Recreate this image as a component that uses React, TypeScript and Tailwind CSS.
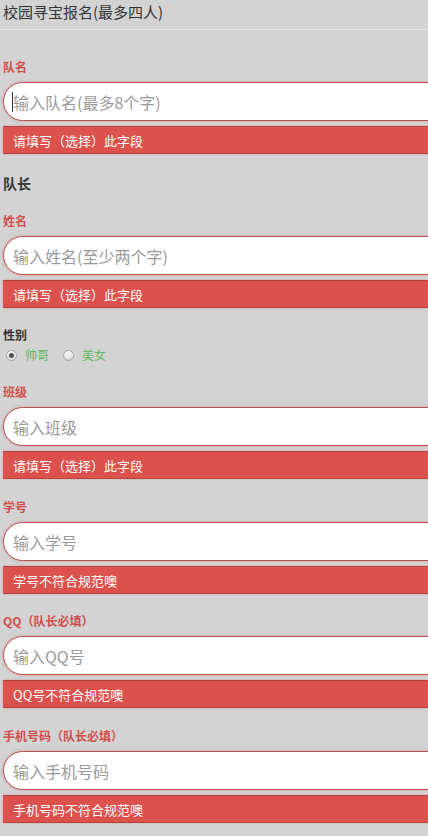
import React from "react";

const font = { fontFamily: '"Noto Sans CJK SC", "Noto Sans", sans-serif' };

function Field({
  label,
  placeholder,
  error,
  mt,
  caret,
}: {
  label: string;
  placeholder: string;
  error: string;
  mt: string;
  caret?: boolean;
}) {
  return (
    <div className={mt}>
      <div className="h-[16px] text-[12px] leading-[16px] font-bold text-[#cf4f4a] px-[3px]">{label}</div>
      <div className="mt-[7px] pl-[3px]">
        <div className="relative h-[39px] w-[470px] rounded-l-[20px] border border-[#b8524f] bg-white shadow-[0_0_3px_rgba(220,100,120,0.55)] flex items-center pl-[9px]">
          <span className="text-[16px] text-[#9a9a9a] leading-none">{placeholder}</span>
          {caret && <span className="absolute left-[8px] top-[9px] h-[20px] w-[1px] bg-[#333]" />}
        </div>
      </div>
      <div className="mt-[5px] pl-[3px]">
        <div className="h-[28px] w-[470px] border-y border-[#b5463f] bg-[#dc514b] shadow-[0_0_2px_rgba(220,100,120,0.5)] flex items-center pl-[10px]">
          <span className="text-[13px] text-white leading-none">{error}</span>
        </div>
      </div>
    </div>
  );
}

export default function App() {
  return (
    <div className="w-[428px] h-[836px] overflow-hidden bg-[#d3d3d3]" style={font}>
      <div className="pt-[2px] px-[3px] text-[15px] leading-[20px] text-[#333]">校园寻宝报名(最多四人)</div>
      <div className="mt-[7px] border-t border-[#e6e6e6]" />
      <Field mt="mt-[29px]" label="队名" placeholder="输入队名(最多8个字)" error="请填写（选择）此字段" caret />
      <div className="mt-[19px] px-[3px] h-[20px] text-[14px] leading-[20px] font-bold text-[#333]">队长</div>
      <Field mt="mt-[20px]" label="姓名" placeholder="输入姓名(至少两个字)" error="请填写（选择）此字段" />
      <div className="mt-[19px] px-[3px] h-[16px] text-[12px] leading-[16px] font-bold text-[#333]">性别</div>
      <div className="mt-[4px] h-[16px] flex items-center pl-[6px] text-[12px] text-[#63b863]">
        <span className="w-[11px] h-[11px] rounded-full border border-[#a8a8a8] bg-gradient-to-b from-[#f4f4f4] to-[#dcdcdc] flex items-center justify-center">
          <span className="w-[5px] h-[5px] rounded-full bg-[#555]" />
        </span>
        <span className="ml-[8px]">帅哥</span>
        <span className="ml-[14px] w-[11px] h-[11px] rounded-full border border-[#a8a8a8] bg-gradient-to-b from-[#f8f8f8] to-[#dcdcdc]" />
        <span className="ml-[8px]">美女</span>
      </div>
      <Field mt="mt-[21px]" label="班级" placeholder="输入班级" error="请填写（选择）此字段" />
      <Field mt="mt-[20px]" label="学号" placeholder="输入学号" error="学号不符合规范噢" />
      <Field mt="mt-[19px]" label="QQ（队长必填）" placeholder="输入QQ号" error="QQ号不符合规范噢" />
      <Field mt="mt-[20px]" label="手机号码（队长必填）" placeholder="输入手机号码" error="手机号码不符合规范噢" />
    </div>
  );
}
